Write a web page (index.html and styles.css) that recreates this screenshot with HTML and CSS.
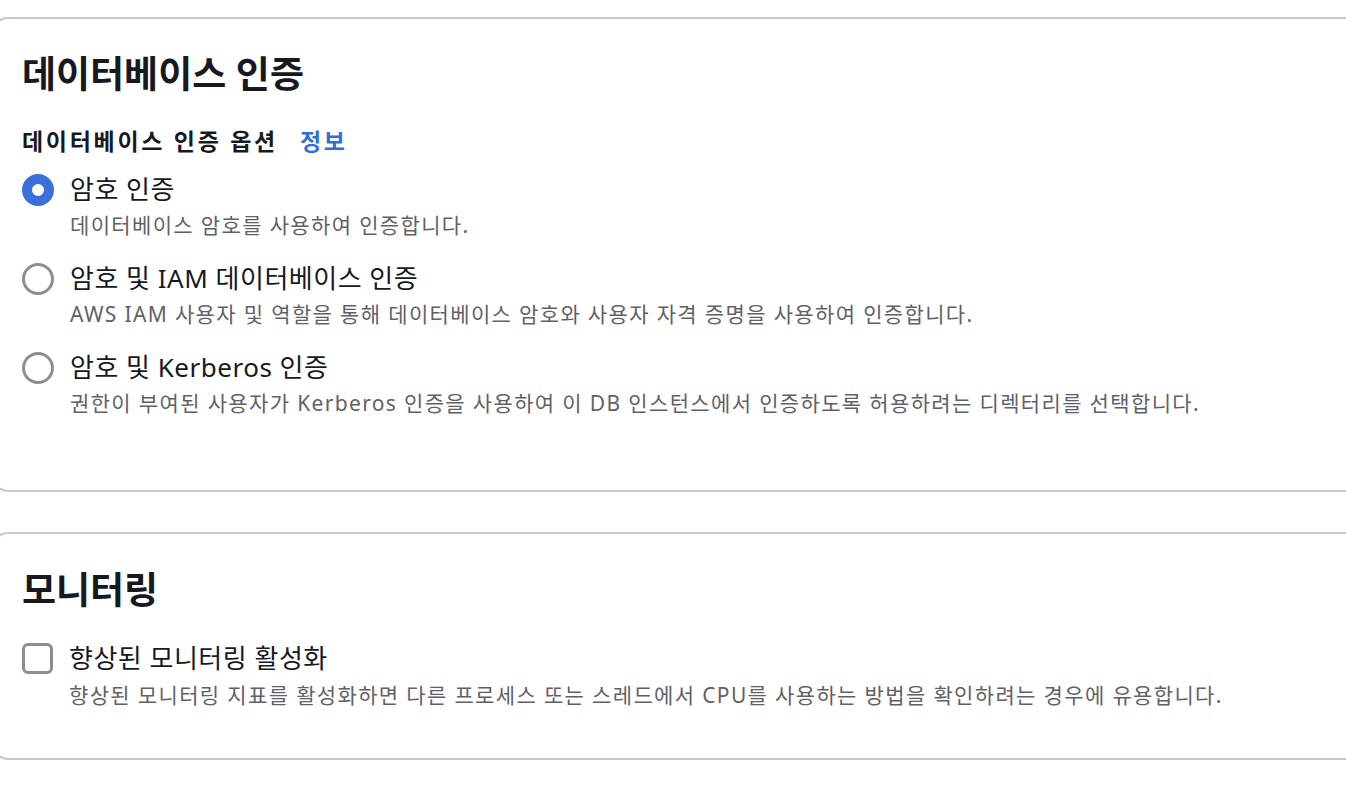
FILE: index.html
```html
<!DOCTYPE html>
<html lang="ko">
<head>
<meta charset="utf-8">
<title>데이터베이스 인증</title>
<link rel="stylesheet" href="styles.css">
</head>
<body>
<div class="frame">
<div class="page">
  <section class="card card-auth">
    <h2 class="card-title">데이터베이스 인증</h2>
    <div class="field-label">
      <span class="field-label-text">데이터베이스 인증 옵션</span>
      <a class="info-link" href="#">정보</a>
    </div>
    <div class="options">
      <div class="option">
        <span class="radio radio-checked"></span>
        <div class="option-text">
          <div class="option-label">암호 인증</div>
          <div class="option-desc">데이터베이스 암호를 사용하여 인증합니다.</div>
        </div>
      </div>
      <div class="option">
        <span class="radio"></span>
        <div class="option-text">
          <div class="option-label">암호 및 IAM 데이터베이스 인증</div>
          <div class="option-desc">AWS IAM 사용자 및 역할을 통해 데이터베이스 암호와 사용자 자격 증명을 사용하여 인증합니다.</div>
        </div>
      </div>
      <div class="option">
        <span class="radio"></span>
        <div class="option-text">
          <div class="option-label">암호 및 Kerberos 인증</div>
          <div class="option-desc">권한이 부여된 사용자가 Kerberos 인증을 사용하여 이 DB 인스턴스에서 인증하도록 허용하려는 디렉터리를 선택합니다.</div>
        </div>
      </div>
    </div>
  </section>

  <section class="card card-monitor">
    <h2 class="card-title">모니터링</h2>
    <div class="options options-check">
      <div class="option option-checkbox">
        <span class="checkbox"></span>
        <div class="option-text">
          <div class="option-label">향상된 모니터링 활성화</div>
          <div class="option-desc">향상된 모니터링 지표를 활성화하면 다른 프로세스 또는 스레드에서 CPU를 사용하는 방법을 확인하려는 경우에 유용합니다.</div>
        </div>
      </div>
    </div>
  </section>
</div>
</div>
</body>
</html>
```

FILE: styles.css
```css
* { box-sizing: border-box; }

html, body {
  margin: 0;
  padding: 0;
  background: #ffffff;
}

body {
  font-family: "Noto Sans", "Noto Sans CJK KR", sans-serif;
  color: #16191f;
}

.frame {
  width: 100%;
  overflow: hidden;
}

.page {
  margin: 0 -120px 0 -8px;
  padding-top: 17px;
  padding-bottom: 34px;
  display: flex;
  flex-direction: column;
  gap: 40px;
}

.card {
  border: 2px solid #c6c6cd;
  border-radius: 16px;
  padding-left: 28px;
  padding-right: 120px;
}

.card-auth {
  padding-top: 33px;
  padding-bottom: 72px;
}

.card-monitor {
  padding-top: 34px;
  padding-bottom: 48px;
}

.card-title {
  margin: 0;
  font-size: 37px;
  line-height: 44px;
  font-weight: 700;
  color: #16191f;
}

.field-label {
  margin-top: 31px;
  display: flex;
  align-items: center;
  gap: 22px;
  line-height: 28px;
}

.field-label-text {
  font-size: 23px;
  font-weight: 700;
  letter-spacing: 2.7px;
}

.info-link {
  font-size: 23px;
  font-weight: 700;
  letter-spacing: 2.7px;
  color: #2f6fd8;
  text-decoration: none;
}

.options {
  margin-top: 17px;
  display: flex;
  flex-direction: column;
  gap: 21px;
}

.options-check {
  margin-top: 29px;
}

.option {
  display: flex;
  align-items: flex-start;
  gap: 16px;
}

.option-text {
  display: flex;
  flex-direction: column;
  gap: 4px;
}

.option-checkbox .option-text {
  gap: 5px;
}

.option-label {
  font-size: 26px;
  line-height: 34px;
  letter-spacing: 0.5px;
  color: #16191f;
}

.option-desc {
  font-size: 21px;
  line-height: 30px;
  letter-spacing: 1.35px;
  color: #5f6168;
}

.radio {
  flex: none;
  width: 32px;
  height: 32px;
  margin-top: 2px;
  border-radius: 50%;
  border: 3.5px solid #8c8c94;
  background: #ffffff;
}

.radio-checked {
  border: 10.5px solid #3b6fdc;
}

.checkbox {
  flex: none;
  width: 31px;
  height: 31px;
  margin-top: 2px;
  border-radius: 6px;
  border: 3.5px solid #8c8c94;
  background: #ffffff;
}
```
